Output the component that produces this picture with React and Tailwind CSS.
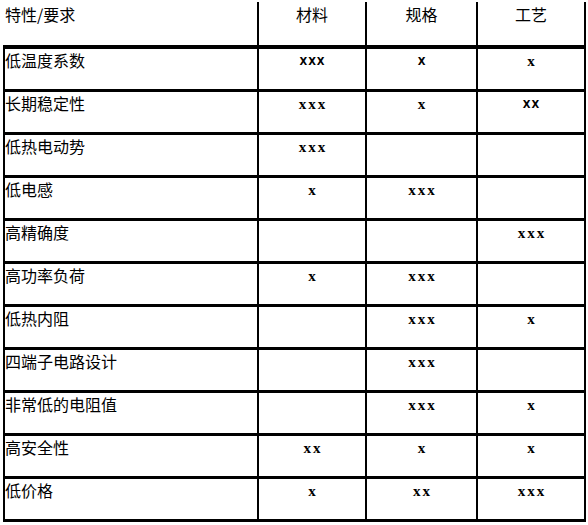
import React from "react";

const S = (t) => ({ t, k: "s" });
const rows = [
  ["低温度系数", S("XXX"), S("X"), "x"],
  ["长期稳定性", "xxx", "x", S("XX")],
  ["低热电动势", "xxx", "", ""],
  ["低电感", "x", "xxx", ""],
  ["高精确度", "", "", "xxx"],
  ["高功率负荷", "x", "xxx", ""],
  ["低热内阻", "", "xxx", "x"],
  ["四端子电路设计", "", "xxx", ""],
  ["非常低的电阻值", "", "xxx", "x"],
  ["高安全性", "xx", "x", "x"],
  ["低价格", "x", "xx", "xxx"],
];

const cjk = "font-['Noto_Sans_CJK_SC',sans-serif] text-[16px] leading-[20px] text-black";

function Mark({ v }) {
  if (!v) return null;
  if (typeof v === "object") {
    return (
      <div className="pt-[6px] pl-[1px] text-center font-['DejaVu_Sans',sans-serif] text-[10px] font-bold leading-[14px] tracking-[1px] text-black">
        {v.t}
      </div>
    );
  }
  return (
    <div className="pt-[4px] pl-[2px] text-center font-['Liberation_Serif',serif] text-[15px] font-bold leading-[16px] tracking-[2px] text-black">
      {v}
    </div>
  );
}

export default function App() {
  return (
    <div className="h-[525px] w-[588px] bg-white">
      <div className="ml-[3px] mt-[2px] w-[583px]">
        {/* header */}
        <div className="grid grid-cols-[256px_108px_111px_108px] border-b-4 border-black">
          <div className={`h-[43px] border-r-2 border-black pl-[2px] pt-[2px] ${cjk}`}>特性/要求</div>
          <div className={`h-[43px] border-r-2 border-black pt-[2px] text-center ${cjk}`}>材料</div>
          <div className={`h-[43px] border-r-2 border-black pt-[2px] text-center ${cjk}`}>规格</div>
          <div className={`h-[43px] border-r-2 border-black pt-[2px] text-center ${cjk}`}>工艺</div>
        </div>
        {rows.map((r, i) => (
          <div
            key={i}
            className="grid grid-cols-[256px_108px_111px_108px] border-b-[3px] border-black"
          >
            <div className={`h-[40px] border-l-2 border-r-2 border-black pt-[1px] ${cjk}`}>{r[0]}</div>
            <div className="h-[40px] border-r-2 border-black">
              <Mark v={r[1]} />
            </div>
            <div className="h-[40px] border-r-2 border-black">
              <Mark v={r[2]} />
            </div>
            <div className="h-[40px] border-r-2 border-black">
              <Mark v={r[3]} />
            </div>
          </div>
        ))}
      </div>
    </div>
  );
}
